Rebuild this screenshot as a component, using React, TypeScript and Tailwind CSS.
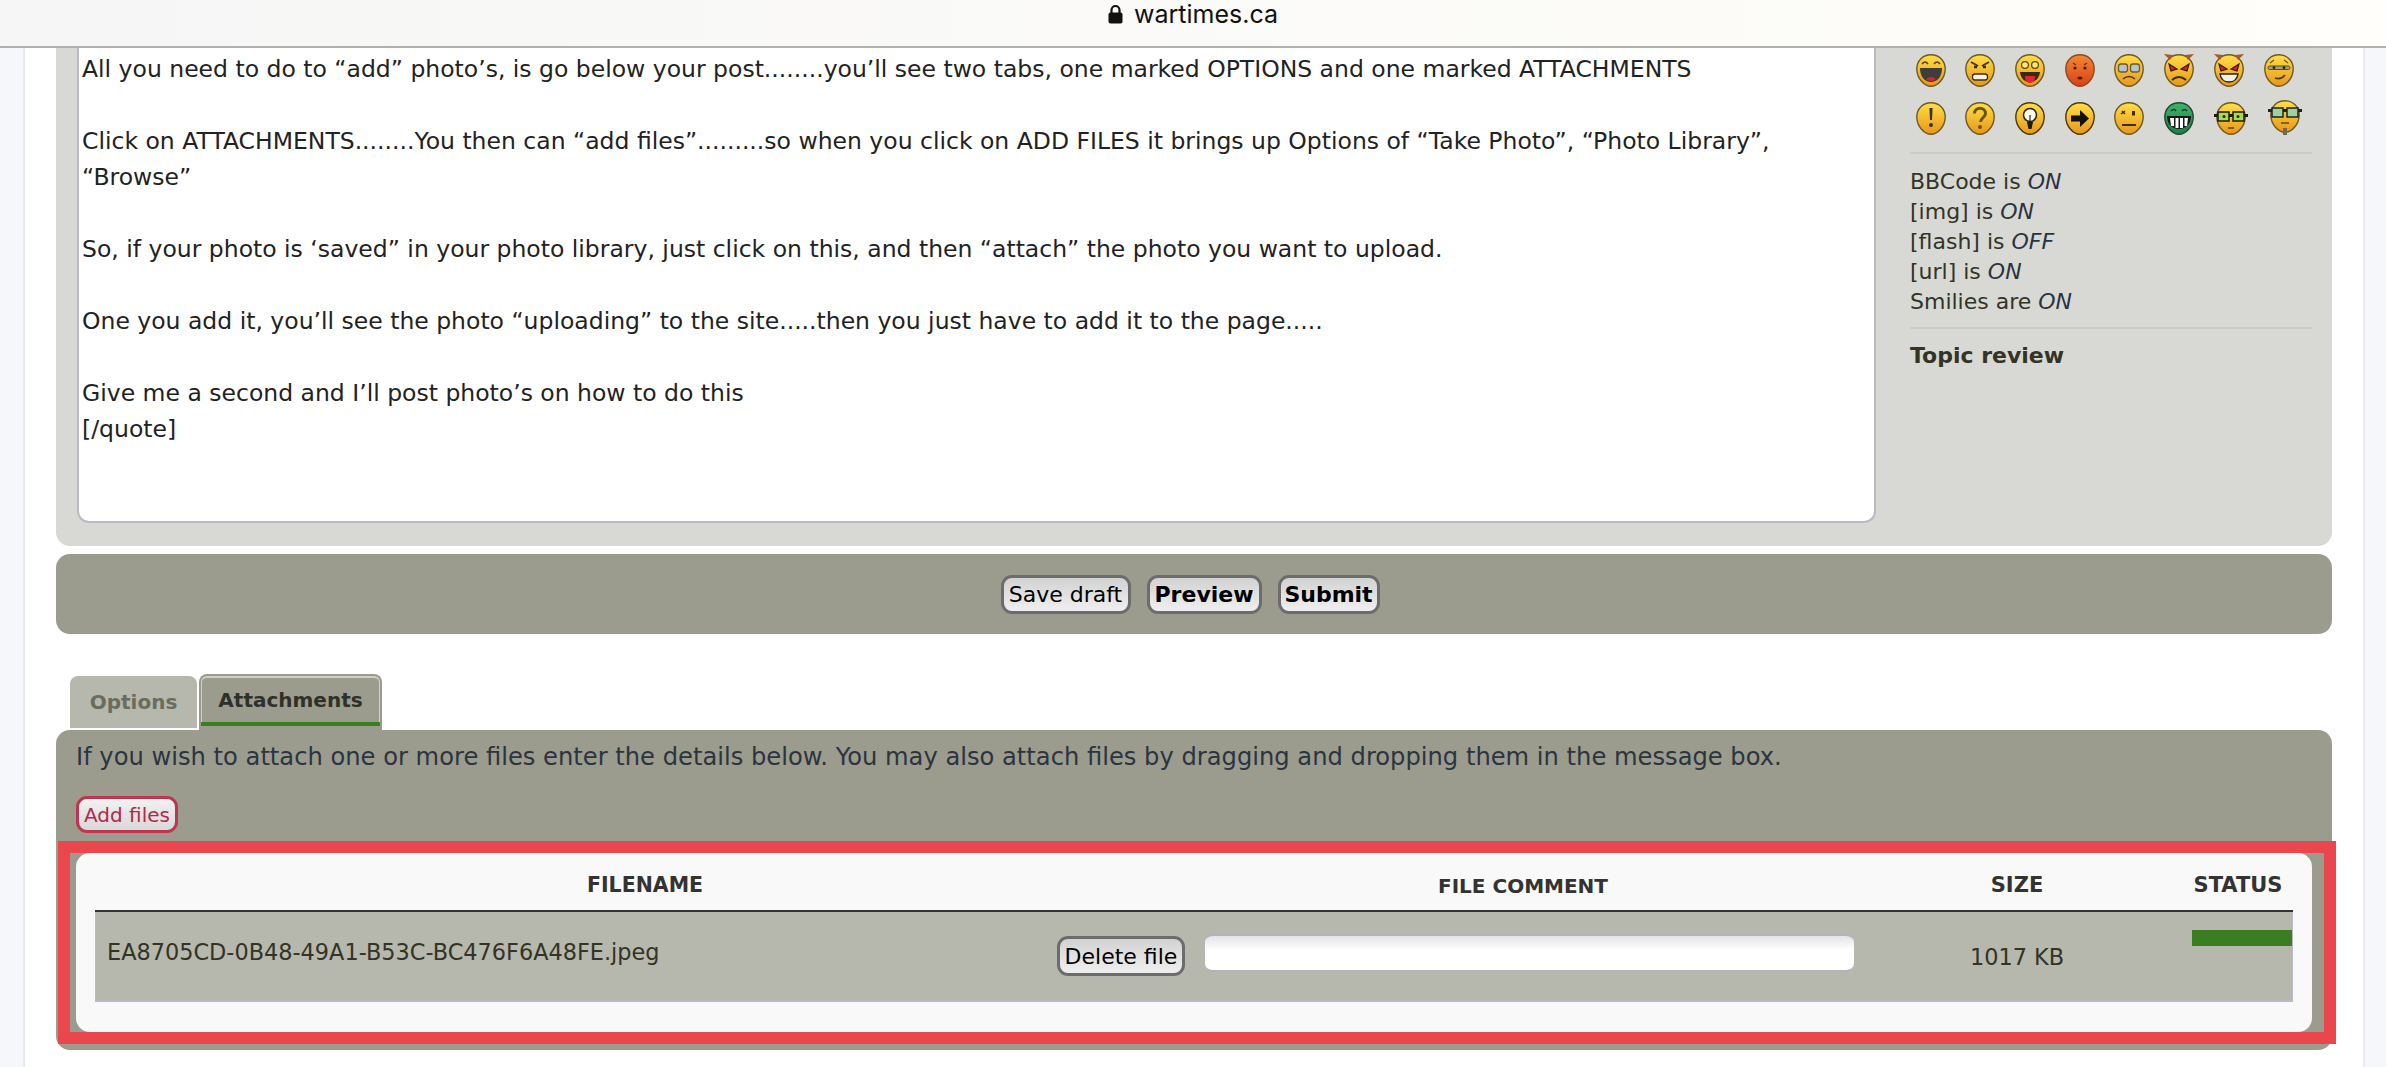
import { ReactNode } from "react";

const Face = ({ id, children, w = 30, from = "#ffdf45", to = "#e8961c", stroke = "#6e5a26" }: { id: string; children?: ReactNode; w?: number; from?: string; to?: string; stroke?: string }) => (
  <svg width={w} height={33} viewBox={`0 0 ${w} 33`} className="block shrink-0 overflow-visible">
    <defs>
      <linearGradient id={id} x1="0" y1="0" x2="0" y2="1">
        <stop offset="0" stopColor={from} />
        <stop offset="1" stopColor={to} />
      </linearGradient>
    </defs>
    <path
      transform={`translate(${(w - 30) / 2} 0)`}
      d="M15 .8C23 .8 29.2 6.5 29.2 15C29.2 24 22 32.2 15 32.2C8 32.2 .8 24 .8 15C.8 6.5 7 .8 15 .8Z"
      fill={`url(#${id})`}
      stroke={stroke}
      strokeWidth="1.4"
    />
    <g transform={`translate(${(w - 30) / 2} 0)`}>{children}</g>
  </svg>
);

const Row1 = () => (
  <div className="flex items-start">
    <div className="w-[49px]">
      <Face id="f1">
        <path d="M6 10q3-4 6 0M18 10q3-4 6 0" fill="none" stroke="#5b4710" strokeWidth="1.6" />
        <path d="M4 14h22c0 9-5 14-11 14S4 23 4 14Z" fill="#3d3d3d" />
        <path d="M10 25q5-4 10 0q-5 4-10 0Z" fill="#d8232a" />
      </Face>
    </div>
    <div className="w-[50px]">
      <Face id="f2">
        <path d="M6 8l7 4M24 8l-7 4" stroke="#4a3a08" strokeWidth="2" />
        <path d="M9 13h3M18 13h3" stroke="#33290a" strokeWidth="2.4" />
        <rect x="7.5" y="20" width="15" height="6" rx="2.5" fill="#f3f0e4" stroke="#3a3010" strokeWidth="1.3" />
      </Face>
    </div>
    <div className="w-[50px]">
      <Face id="f3">
        <circle cx="10" cy="11" r="3.4" fill="#ffe87a" stroke="#5b4710" strokeWidth="1.2" />
        <circle cx="20" cy="11" r="3.4" fill="#ffe87a" stroke="#5b4710" strokeWidth="1.2" />
        <path d="M5 18h20c-1 7-5 10-10 10S6 25 5 18Z" fill="#3a2a10" />
        <path d="M10 22h10c0 5-2 7-5 7s-5-2-5-7Z" fill="#e0262c" />
      </Face>
    </div>
    <div className="w-[49px]">
      <Face id="f4" from="#f08a32" to="#dc3f1a" stroke="#8a4a20">
        <path d="M8 9l3 2M22 9l-3 2" stroke="#7a2a10" strokeWidth="1.3" />
        <circle cx="10" cy="14" r="1.6" fill="#4a1a0a" />
        <circle cx="20" cy="14" r="1.6" fill="#4a1a0a" />
        <ellipse cx="15" cy="24" rx="2.6" ry="1.6" fill="#5a1a0a" />
      </Face>
    </div>
    <div className="w-[50px]">
      <Face id="f5">
        <rect x="4.5" y="10" width="9" height="8" rx="2.5" fill="#b9c4c8" stroke="#665a3a" strokeWidth="1.3" />
        <rect x="16.5" y="10" width="9" height="8" rx="2.5" fill="#b9c4c8" stroke="#665a3a" strokeWidth="1.3" />
        <path d="M9 25q6-5 12 0" fill="none" stroke="#4a3a10" strokeWidth="1.6" />
      </Face>
    </div>
    <div className="w-[50px]">
      <Face id="f6">
        <path d="M0 0l6 6l3-5ZM30 0l-6 6l-3-5Z" fill="#a8562a" />
        <path d="M5 10l8 5l-6 2ZM25 10l-8 5l6 2Z" fill="#d3201f" stroke="#3a1a08" strokeWidth="1.2" />
        <path d="M8 26q7-6 14 0" fill="none" stroke="#3a2a08" strokeWidth="2" />
      </Face>
    </div>
    <div className="w-[50px]">
      <Face id="f7">
        <path d="M0 0l6 6l3-5ZM30 0l-6 6l-3-5Z" fill="#a8562a" />
        <path d="M5 10l8 5l-6 2ZM25 10l-8 5l6 2Z" fill="#d3201f" stroke="#3a1a08" strokeWidth="1.2" />
        <path d="M6 20h18c-1 6-5 8-9 8s-8-2-9-8Z" fill="#f3f0e4" stroke="#2a2008" strokeWidth="1.4" />
      </Face>
    </div>
    <div className="w-[30px]">
      <Face id="f8">
        <path d="M6 9l4-3M24 9l-4-3" stroke="#6a5414" strokeWidth="1.2" />
        <rect x="4" y="12" width="22" height="3.5" rx="1.7" fill="#a7a27c" stroke="#5c4e20" />
        <circle cx="10" cy="13.7" r="1.4" fill="#2a2410" />
        <circle cx="20" cy="13.7" r="1.4" fill="#2a2410" />
        <path d="M11 24q6 2 10-3" fill="none" stroke="#4a3a10" strokeWidth="1.6" />
      </Face>
    </div>
  </div>
);

const Row2 = () => (
  <div className="mt-[15px] flex items-start">
    <div className="w-[49px]">
      <Face id="g1">
        <path d="M13.4 6h3.2l-.6 12h-2Z" fill="#3a3010" />
        <circle cx="15" cy="23" r="2" fill="#3a3010" />
      </Face>
    </div>
    <div className="w-[50px]">
      <Face id="g2">
        <path d="M9.5 11.5c0-7 11-7 11 0c0 4-5 4.5-5 8.5" fill="none" stroke="#6a5414" strokeWidth="3" />
        <circle cx="15" cy="25" r="2" fill="#6a5414" />
      </Face>
    </div>
    <div className="w-[50px]">
      <Face id="g3" stroke="#4a3a10">
        <circle cx="15" cy="13" r="6.5" fill="#fbfbf0" stroke="#2a2208" strokeWidth="1.5" />
        <path d="M12 20h6l-1.500 7h-3Z" fill="#1d1a0a" />
        <path d="M15 13v6" stroke="#2a2208" strokeWidth="1.2" />
      </Face>
    </div>
    <div className="w-[49px]">
      <Face id="g4" stroke="#4a3a10">
        <path d="M6 13.500h9V8l9 8.500-9 8.500v-5.500H6Z" fill="#14110a" />
      </Face>
    </div>
    <div className="w-[50px]">
      <Face id="g5">
        <path d="M7 12l4-3M8 9l3 3" stroke="#3a2e08" strokeWidth="1.4" />
        <rect x="18" y="9" width="3" height="4.500" fill="#3a2e08" />
        <path d="M8 23h14" stroke="#3a2e08" strokeWidth="2" />
      </Face>
    </div>
    <div className="w-[50px]">
      <Face id="g6" from="#3fb36a" to="#1f7d4c" stroke="#1f4a30">
        <path d="M7 9q3-3 5 0M18 9q3-3 5 0" fill="none" stroke="#12402a" strokeWidth="1.5" />
        <path d="M3 14h24c0 8-5 13-12 13S3 22 3 14Z" fill="#1a1a1a" />
        <path d="M6 16h4v8H7ZM11.500 16h3v10h-3ZM16 16h3v10h-3ZM20.500 16h3.500l-1 8h-2.500Z" fill="#fff" />
      </Face>
    </div>
    <div className="w-[54px]">
      <Face id="g7" w={34}>
        <rect x="-2" y="12" width="34" height="3" fill="#1c1c10" />
        <rect x="2" y="10" width="11" height="9" fill="#a8d94e" stroke="#1c1c10" strokeWidth="1.500" />
        <rect x="17" y="10" width="11" height="9" fill="#a8d94e" stroke="#1c1c10" strokeWidth="1.500" />
        <circle cx="8" cy="14.500" r="1.500" fill="#2a2a10" />
        <circle cx="22" cy="14.500" r="1.500" fill="#2a2a10" />
        <path d="M12 26h6" stroke="#6a4a10" strokeWidth="1.600" />
      </Face>
    </div>
    <div className="-mt-[2px] w-[34px]">
      <Face id="g8" w={34}>
        <rect x="-2" y="9" width="34" height="3" fill="#1c2420" />
        <rect x="2" y="8" width="11" height="9" fill="#9fd0a0" stroke="#1c2420" strokeWidth="1.500" />
        <rect x="17" y="8" width="11" height="9" fill="#9fd0a0" stroke="#1c2420" strokeWidth="1.500" />
        <path d="M11 23h8" stroke="#6a4a10" strokeWidth="1.500" />
        <rect x="13" y="28" width="4" height="7" fill="#6e6a58" />
      </Face>
    </div>
  </div>
);

export default function App() {
  return (
    <div className="flex h-screen flex-col overflow-hidden bg-white [font-family:'DejaVu_Sans',Verdana,sans-serif] text-[#333326]">
      {/* Browser bar */}
      <div className="flex h-[48px] shrink-0 justify-center border-b-2 border-[#b0b0ae] bg-gradient-to-r from-[#f6f6f6] to-[#fffefa] pt-[1px]">
        <div className="flex h-[26px] items-center gap-[11px] [font-family:Inter,sans-serif] text-[25px] leading-[26px] text-[#111]">
          <svg width="15" height="20" viewBox="0 0 15 20">
            <path d="M3.500 9V6a4 4 0 0 1 8 0v3" fill="none" stroke="#111" strokeWidth="2.200" />
            <rect x="0.500" y="8.500" width="14" height="11" rx="2" fill="#111" />
          </svg>
          wartimes.ca
        </div>
      </div>

      <div className="flex flex-1">
        <div className="w-[25px] shrink-0 border-r-2 border-[#e8eaef] bg-[#f5f7fb]" />

        <div className="min-w-0 flex-1 px-[31px]">
          {/* Editor */}
          <div className="flex h-[498px] rounded-b-[14px] bg-[#d8d9d4] pl-[21px]">
            <div className="h-[475px] w-[1799px] shrink-0 rounded-b-[12px] border-x-2 border-b-2 border-[#b9bac4] bg-white pl-[3px] pt-[3px] text-[23.5px] leading-[36px] text-[#222]">
              <p>All you need to do to “add” photo’s, is go below your post........you’ll see two tabs, one marked OPTIONS and one marked ATTACHMENTS</p>
              <p className="mt-[36px]">Click on ATTACHMENTS........You then can “add files”.........so when you click on ADD FILES it brings up Options of “Take Photo”, “Photo Library”, “Browse”</p>
              <p className="mt-[36px]">So, if your photo is ‘saved” in your photo library, just click on this, and then “attach” the photo you want to upload.</p>
              <p className="mt-[36px]">One you add it, you’ll see the photo “uploading” to the site.....then you just have to add it to the page.....</p>
              <p className="mt-[36px]">Give me a second and I’ll post photo’s on how to do this</p>
              <p>[/quote]</p>
            </div>

            <div className="ml-[34px] w-[402px] pt-[6px]">
              <div className="pl-[6px]">
                <Row1 />
                <Row2 />
              </div>
              <div className="mt-[17px] h-[2px] bg-[#cbccc8]" />
              <div className="mt-[13px] text-[22px] leading-[30px]">
                <div>BBCode is <em className="text-[#2b3340]">ON</em></div>
                <div>[img] is <em className="text-[#2b3340]">ON</em></div>
                <div>[flash] is <em className="text-[#2b3340]">OFF</em></div>
                <div>[url] is <em className="text-[#2b3340]">ON</em></div>
                <div>Smilies are <em className="text-[#2b3340]">ON</em></div>
              </div>
              <div className="mt-[10px] h-[2px] bg-[#cbccc8]" />
              <div className="mt-[12px] text-[22px] font-bold leading-[30px]">Topic review</div>
            </div>
          </div>

          {/* Buttons */}
          <div className="mt-[8px] flex h-[80px] items-center justify-center gap-[16px] rounded-[14px] bg-[#9b9c8d] pr-[8px] text-[22px] text-black">
            <button className="h-[39px] w-[130px] rounded-[11px] border-[3px] border-[#6c6c6c] bg-gradient-to-b from-[#d2d2d2] to-[#efefef]">Save draft</button>
            <button className="h-[39px] w-[115px] rounded-[11px] border-[3px] border-[#6c6c6c] bg-gradient-to-b from-[#d2d2d2] to-[#efefef] font-bold">Preview</button>
            <button className="h-[39px] w-[102px] rounded-[11px] border-[3px] border-[#6c6c6c] bg-gradient-to-b from-[#d2d2d2] to-[#efefef] font-bold">Submit</button>
          </div>

          {/* Tabs */}
          <div className="mt-[40px] flex h-[56px] items-start gap-[2px] pl-[14px] text-[20px] font-bold">
            <div className="mt-[2px] flex h-[52px] w-[127px] items-center justify-center rounded-t-[8px] bg-[#b7b8ad] text-[#6a6d5e]">Options</div>
            <div className="h-[56px] w-[183px] rounded-t-[8px] border-x-2 border-t-2 border-[#9b9c8d] bg-[#9b9c8d]">
              <div className="flex h-[46px] items-center justify-center rounded-t-[6px] border-x border-t-2 border-[#cfd0c8] text-[#2f3029]">Attachments</div>
              <div className="h-[4px] bg-[#3a7d22]" />
            </div>
          </div>

          {/* Attachments panel */}
          <div className="relative h-[320px] rounded-[14px] bg-[#9b9c8d] px-[20px]">
            <p className="pt-[13px] text-[24.2px] leading-[28px] text-[#2c3440]">If you wish to attach one or more files enter the details below. You may also attach files by dragging and dropping them in the message box.</p>
            <button className="mt-[25px] block h-[37px] w-[102px] rounded-[11px] border-[3px] border-[#c0344f] bg-gradient-to-b from-[#f2f2f2] to-[#d8d8d8] text-[20px] leading-none text-[#b8274a]">Add files</button>

            <div className="mt-[20px] h-[179px] rounded-[14px] bg-[#f9f9f9] px-[19px]">
              <div className="grid h-[59px] grid-cols-[1100px_656px_332px_110px] items-center border-b-2 border-[#333] pt-[8px] text-center text-[21px] font-bold text-[#333]">
                <div className="text-[20.500px]">FILENAME</div>
                <div className="text-[20px]">FILE COMMENT</div>
                <div>SIZE</div>
                <div>STATUS</div>
              </div>
              <div className="grid h-[90px] grid-cols-[1099px_656px_332px_109px] border-x border-b-2 border-x-[#b9bac8] border-b-[#b9bac8] bg-[#b7b8ad] text-[22.400px] text-[#333326]">
                <div className="relative">
                  <span className="absolute left-[11px] top-[26px] leading-[28px]">EA8705CD-0B48-49A1-B53C-BC476F6A48FE.jpeg</span>
                  <button className="absolute right-[10px] top-[24px] h-[40px] w-[128px] rounded-[11px] border-[3px] border-[#6c6c6c] bg-gradient-to-b from-[#d2d2d2] to-[#efefef] text-[22px] text-black">Delete file</button>
                </div>
                <div className="pl-[10px] pt-[22px]">
                  <div className="h-[38px] w-[649px] rounded-[8px] border-y-2 border-[#b1b2bc] bg-gradient-to-b from-[#e4e4e6] to-white bg-[length:100%_14px] bg-no-repeat bg-white" />
                </div>
                <div className="pt-[31px] text-center leading-[28px]">1017 KB</div>
                <div className="pl-[9px] pt-[18px]">
                  <div className="h-[16px] w-[100px] bg-[#3a7d22]" />
                </div>
              </div>
            </div>

            {/* red highlight drawn over the table */}
            <div className="pointer-events-none absolute left-[2px] top-[111px] h-[203px] w-[2278px] border-[12px] border-[#e9464e]" />
          </div>
        </div>

        <div className="w-[23px] shrink-0 border-l-2 border-[#e8eaef] bg-[#f5f7fb]" />
      </div>
    </div>
  );
}
